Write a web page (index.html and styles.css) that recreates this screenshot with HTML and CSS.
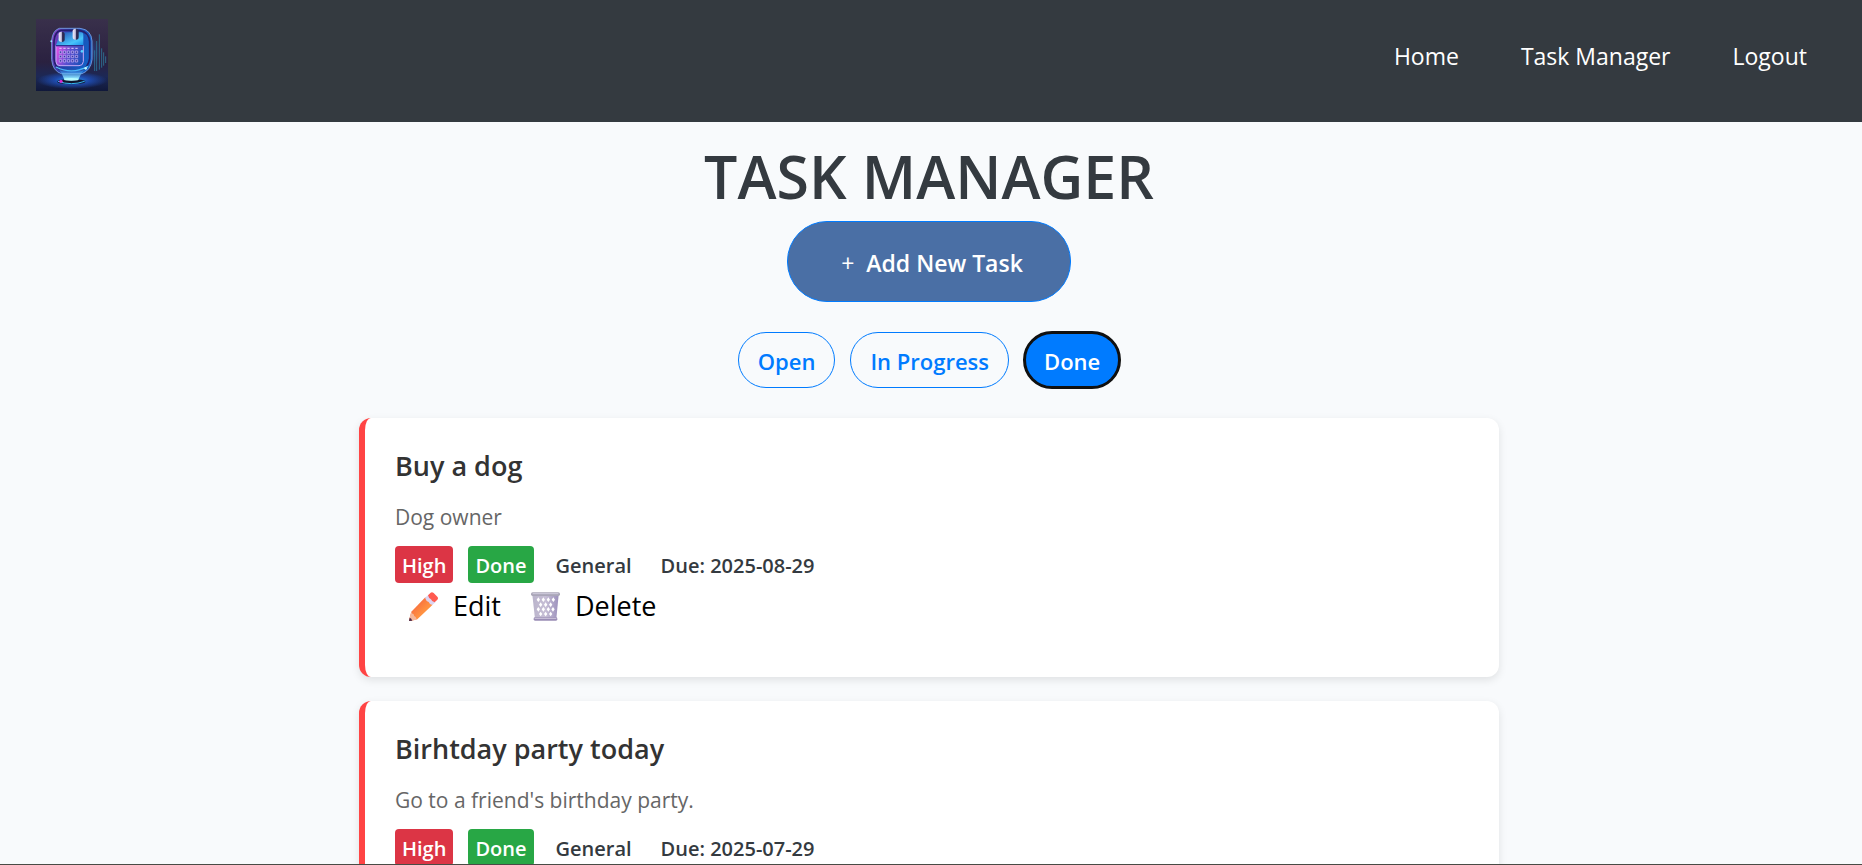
FILE: index.html
```html
<!DOCTYPE html>
<html lang="en">
<head>
<meta charset="utf-8">
<title>Task Manager</title>
<link rel="stylesheet" href="styles.css">
</head>
<body>
<header class="site-header">
  <a class="brand" href="#" aria-label="Home page">
    <svg class="logo" viewBox="0 0 216 216" aria-hidden="true">
      <defs>
        <linearGradient id="sky" x1="0" y1="0" x2="0" y2="1"><stop offset="0" stop-color="#39304b"/><stop offset=".6" stop-color="#2a2140"/><stop offset=".8" stop-color="#1c2856"/><stop offset="1" stop-color="#10183a"/></linearGradient>
        <linearGradient id="shell" x1="0" y1=".2" x2="1" y2=".5"><stop offset="0" stop-color="#8a3cc0"/><stop offset=".4" stop-color="#2340a8"/><stop offset="1" stop-color="#1263c8"/></linearGradient>
        <linearGradient id="page" x1="0" y1=".3" x2="1" y2=".6"><stop offset="0" stop-color="#dc50e4"/><stop offset=".5" stop-color="#5a50d0"/><stop offset="1" stop-color="#1c50b8"/></linearGradient>
        <linearGradient id="top" x1="0" y1="0" x2="1" y2="1"><stop offset="0" stop-color="#2347b0"/><stop offset=".7" stop-color="#48c4fb"/><stop offset="1" stop-color="#198be8"/></linearGradient>
        <linearGradient id="ring" x1="0" y1="0" x2="1" y2="0"><stop offset="0" stop-color="#f2eefc"/><stop offset=".45" stop-color="#c8c4e0"/><stop offset=".6" stop-color="#34305a"/><stop offset="1" stop-color="#25244a"/></linearGradient>
        <linearGradient id="beam" x1="0" y1="0" x2="0" y2="1"><stop offset="0" stop-color="#2388f0" stop-opacity=".3"/><stop offset=".9" stop-color="#a7f8ff"/></linearGradient>
        <radialGradient id="glow"><stop offset="0" stop-color="#2aa6ff"/><stop offset=".5" stop-color="#2057cc" stop-opacity=".7"/><stop offset="1" stop-color="#2057cc" stop-opacity="0"/></radialGradient>
      </defs>
      <path fill="url(#sky)" d="M0 0h216v216H0z"/>
      <ellipse cx="108" cy="184" rx="106" ry="26" fill="url(#glow)"/>
      <ellipse cx="160" cy="98" rx="36" ry="50" fill="url(#glow)" opacity=".4"/>
      <path d="M176 156V94M182 156V66M190 152V46M197 146V88M203 140V100M209 132V112" stroke="#2f91b5" stroke-width="3" opacity=".65"/>
      <path d="M70 28h62q34 4 36 38v56q-4 32-30 42H76q-26-8-29-42V64q3-30 23-36z" fill="url(#shell)" stroke="#6e93d8" stroke-width="3"/>
      <path d="M75 34h54q30 4 32 34v50q-4 30-28 36H80q-24-6-26-36V66q2-28 21-32z" fill="none" stroke="#241f6e" stroke-width="5"/>
      <path d="M72 46q3-6 14-6h48q8 0 8 10v29H60z" fill="url(#top)"/>
      <path d="M60 80h82v48q-1 12-13 12H72q-12 0-12-12z" fill="url(#page)" stroke="#c5a9f6" stroke-width="3"/>
      <path d="M60 80h82" stroke="#2a2f92" stroke-width="4"/>
      <path d="M70 88h7M82 88h7M94 88h7M106 88h7M118 88h7" stroke="#dcd0ff" stroke-width="3"/>
      <g fill="#35379e" stroke="#cfbaff" stroke-width="2">
        <path d="M70 96h7v7h-7zm12 0h7v7h-7zm12 0h7v7h-7zm12 0h7v7h-7zm12 0h7v7h-7zM70 109h7v7h-7zm12 0h7v7h-7zm12 0h7v7h-7zm12 0h7v7h-7zm12 0h7v7h-7zM70 122h7v7h-7zm12 0h7v7h-7zm12 0h7v7h-7zm12 0h7v7h-7zm12 0h7v7h-7z"/>
      </g>
      <rect x="68" y="38" width="18" height="31" rx="8" fill="url(#ring)"/>
      <rect x="110" y="29" width="18" height="33" rx="8" fill="url(#ring)"/>
      <path d="M60 144q48 24 96-2" fill="none" stroke="#55c9ff" stroke-width="4"/>
      <ellipse cx="106" cy="188" rx="42" ry="8" fill="#10152e"/>
      <path d="M68 150h78q-14 18-20 34H86q-6-18-18-34z" fill="url(#beam)"/>
      <path d="M66 187q40 14 80 0" fill="none" stroke="#36b8f4" stroke-width="3"/>
      <ellipse cx="106" cy="181" rx="22" ry="4" fill="#b7fbff"/>
      <circle cx="75" cy="187" r="5" fill="#d62bd0"/>
      <circle cx="46" cy="67" r="3" fill="#9be4ff"/><circle cx="138" cy="97" r="4" fill="#57d4ff"/><circle cx="149" cy="148" r="4" fill="#bff5ff"/>
    </svg>
  </a>
  <nav class="nav">
    <a href="#">Home</a>
    <a href="#">Task Manager</a>
    <a href="#">Logout</a>
  </nav>
</header>

<main class="page">
  <h1 class="page-title">TASK MANAGER</h1>
  <button class="add-button" type="button"><span class="plus">+</span>Add New Task</button>
  <div class="filters">
    <button class="filter" type="button">Open</button>
    <button class="filter" type="button">In Progress</button>
    <button class="filter filter-active" type="button">Done</button>
  </div>

  <section class="tasks">
    <article class="task">
      <h2 class="task-title">Buy a dog</h2>
      <p class="task-text">Dog owner</p>
      <div class="tags">
        <span class="tag tag-high">High</span>
        <span class="tag tag-done">Done</span>
        <span class="tag tag-plain">General</span>
        <span class="tag tag-plain">Due: 2025-08-29</span>
      </div>
      <div class="actions">
        <button class="action" type="button">
          <svg class="action-icon" viewBox="0 0 87 87" aria-hidden="true">
            <defs><linearGradient id="wood" x1="0" y1="0" x2="1" y2="1"><stop offset=".2" stop-color="#f6683f"/><stop offset=".6" stop-color="#ff9141"/></linearGradient></defs>
            <path d="M49 16 71 38 25 82 1 87 1 81 7 59z" fill="url(#wood)"/>
            <path d="M7 59q1 7 7 8 0 7 6 8 1 5 5 7L7 87 1 80z" fill="#f5b79a"/>
            <path d="M2 77q5 2 8 9L0 87z" fill="#4a2648"/>
            <path d="M48 17 59 8 80 30 70 39q-8-1-11-9-8-3-11-13z" fill="#dcd3f0"/>
            <path d="M57 10 65 2q4-3 9 1l11 11q4 5 0 9l-8 8q-8-1-11-9-7-3-9-12z" fill="#ff5a50"/>
          </svg>
          Edit
        </button>
        <button class="action" type="button">
          <svg class="action-icon" viewBox="0 0 87 87" aria-hidden="true">
            <defs>
              <linearGradient id="basket" x1="0" y1="0" x2="1" y2="0"><stop offset="0" stop-color="#bab4cb"/><stop offset=".5" stop-color="#c7bfd6"/><stop offset="1" stop-color="#9c91bc"/></linearGradient>
              <clipPath id="basket-shape"><path d="M4 8h79l-7 72H12z"/></clipPath>
            </defs>
            <path d="M4 8h79l-7 72H12z" fill="url(#basket)"/>
            <path clip-path="url(#basket-shape)" fill="#fff" d="M22 16l5 7-5 7-5-7zM37 16l5 7-5 7-5-7zM52 16l5 7-5 7-5-7zM67 16l5 7-5 7-5-7zM29 31l5 7-5 7-5-7zM44 31l5 7-5 7-5-7zM59 31l5 7-5 7-5-7zM22 45l5 7-5 7-5-7zM37 45l5 7-5 7-5-7zM52 45l5 7-5 7-5-7zM66 45l5 7-5 7-5-7zM29 59l5 7-5 7-5-7zM44 59l5 7-5 7-5-7zM59 59l5 7-5 7-5-7z"/>
            <rect y="1" width="87" height="11" rx="5" fill="#aaa7b8"/>
            <path d="M5 5h77" stroke="#d0cddd" stroke-width="3"/>
            <rect x="8" y="76" width="71" height="10" rx="4" fill="#9a8db5"/>
            <path d="M11 79h65" stroke="#cfc7dc" stroke-width="3"/>
          </svg>
          Delete
        </button>
      </div>
    </article>

    <article class="task">
      <h2 class="task-title">Birhtday party today</h2>
      <p class="task-text">Go to a friend's birthday party.</p>
      <div class="tags">
        <span class="tag tag-high">High</span>
        <span class="tag tag-done">Done</span>
        <span class="tag tag-plain">General</span>
        <span class="tag tag-plain">Due: 2025-07-29</span>
      </div>
    </article>
  </section>
</main>
</body>
</html>
```

FILE: styles.css
```css
* {
  box-sizing: border-box;
}

body {
  margin: 0;
  height: 100vh;
  overflow: hidden;
  display: flex;
  flex-direction: column;
  background: #f8fafc;
  border-bottom: 1px solid #494b45;
  color: #343a40;
  font-family: "Segoe UI", "Open Sans", "Noto Sans", sans-serif;
}

button {
  font-family: inherit;
  cursor: pointer;
}

.site-header {
  flex: none;
  display: flex;
  align-items: center;
  justify-content: space-between;
  padding: 19px 55px 31px 36px;
  background: #343a40;
}

.brand,
.logo {
  display: block;
  width: 72px;
  height: 72px;
}

.nav {
  display: flex;
  gap: 62px;
  padding-top: 2px;
}

.nav a {
  color: #fff;
  font-size: 23px;
  line-height: 36px;
  text-decoration: none;
}

.page {
  flex: 1;
  min-height: 0;
  display: flex;
  flex-direction: column;
  align-items: center;
  padding: 18px 28px 0 24px;
  overflow: hidden;
}

.page-title {
  flex: none;
  margin: 0 0 9px;
  font-size: 59px;
  font-weight: 600;
  line-height: 72px;
}

.add-button {
  flex: none;
  display: flex;
  align-items: center;
  gap: 12px;
  padding: 24px 47px 20px 53px;
  border: 1px solid #007bff;
  border-radius: 40px;
  background: #4a6fa5;
  color: #fff;
  font-size: 23px;
  font-weight: 600;
  line-height: 35px;
}

.plus {
  font-weight: 400;
}

.filters {
  flex: none;
  display: flex;
  gap: 15px;
  margin: 30px 0;
}

.filter {
  padding: 11px 19px 9px;
  border: 1px solid #007bff;
  border-radius: 28px;
  background: transparent;
  color: #007bff;
  font-size: 22px;
  font-weight: 600;
  line-height: 34px;
}

.filter-active {
  background: #007bff;
  color: #fff;
  outline: 3px solid #101010;
  outline-offset: -2px;
}

.tasks {
  flex: none;
  width: 100%;
  max-width: 1140px;
  display: flex;
  flex-direction: column;
  gap: 24px;
}

.task {
  padding: 30px;
  border-left: 6px solid #ff4444;
  border-radius: 12px;
  background: #fff;
  box-shadow: 0 3px 9px rgba(0, 0, 0, 0.1);
}

.task-title {
  margin: 0 0 18px;
  color: #333;
  font-size: 27px;
  font-weight: 600;
  line-height: 36px;
}

.task-text {
  margin: 0 0 14px;
  color: #666;
  font-size: 21px;
  line-height: 30px;
}

.tags {
  display: flex;
  gap: 15px;
}

.tag {
  padding: 2px 7px 0;
  border-radius: 4px;
  font-size: 20px;
  font-weight: 600;
  line-height: 35px;
}

.tag-high {
  background: #dc3545;
  color: #fff;
}

.tag-done {
  background: #28a745;
  color: #fff;
}

.tag-plain {
  color: #343a40;
}

.actions {
  display: flex;
  gap: 2px;
  margin-bottom: 18px;
}

.action {
  display: flex;
  align-items: center;
  gap: 15px;
  padding: 0 14px;
  border: 0;
  background: transparent;
  color: #000;
  font-size: 27px;
  line-height: 46px;
}

.action-icon {
  width: 29px;
  height: 29px;
}
```
